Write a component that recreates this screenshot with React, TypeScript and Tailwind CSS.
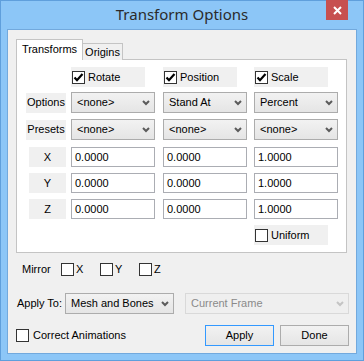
import type { ReactNode } from 'react'

const ui = { fontFamily: '"Liberation Sans", Arial, sans-serif' }

function Box({ checked }: { checked?: boolean }) {
  return (
    <span className="w-[13px] h-[13px] border border-[#333333] bg-white flex-shrink-0 flex items-center justify-center">
      {checked && (
        <svg width="11" height="11" viewBox="0 0 11 11">
          <path d="M1.5 5.5 L4 8.2 L9.5 2" fill="none" stroke="#000" strokeWidth="2.2" />
        </svg>
      )}
    </span>
  )
}

function Check({ label, checked }: { label: string; checked?: boolean }) {
  return (
    <div className="w-[74px] h-[20px] bg-[#f0f0f0] flex items-center pl-[1px] gap-[3px]">
      <Box checked={checked} />
      <span>{label}</span>
    </div>
  )
}

function Chevron({ color = '#5b5b5b' }: { color?: string }) {
  return (
    <svg width="8" height="6" viewBox="0 0 8 6" className="flex-shrink-0">
      <path d="M1 1 L4 4 L7 1" fill="none" stroke={color} strokeWidth="2" />
    </svg>
  )
}

function Select({ value, className = 'w-[84px]', disabled }: { value: string; className?: string; disabled?: boolean }) {
  return (
    <div
      className={`${className} h-[21px] flex items-center justify-between pl-[5px] pr-[4px] border ${
        disabled
          ? 'border-[#d9d9d9] bg-[#efefef] text-[#8a8a8a]'
          : 'border-[#acacac] bg-gradient-to-b from-[#f2f2f2] to-[#e5e5e5] text-black'
      }`}
    >
      <span>{value}</span>
      <Chevron color={disabled ? '#c4c4c4' : '#5b5b5b'} />
    </div>
  )
}

function Field({ value }: { value: string }) {
  return (
    <div className="w-[84px] h-[20px] border border-[#abadb3] bg-white flex items-center pl-[3px]">{value}</div>
  )
}

function Row({ top, cells }: { top: string; cells: ReactNode[] }) {
  return (
    <div className={`flex items-center ${top}`}>
      <div className="w-[40px] flex justify-center">{cells[0]}</div>
      <div className="ml-[5px] w-[84px]">{cells[1]}</div>
      <div className="ml-[8px] w-[84px]">{cells[2]}</div>
      <div className="ml-[7px] w-[84px]">{cells[3]}</div>
    </div>
  )
}

function Label({ text, narrow }: { text: string; narrow?: boolean }) {
  return (
    <div className={`${narrow ? 'w-[37px] ml-[3px]' : 'w-[40px]'} h-[20px] bg-[#f0f0f0] flex items-center justify-center`}>
      {text}
    </div>
  )
}

export default function App() {
  return (
    <div className="w-[364px] h-[361px] bg-[#8cc6f7] border border-[#5f9fdc] flex flex-col text-[11px] text-black" style={ui}>
      {/* Title bar */}
      <div className="h-[28px] relative flex items-center justify-center">
        <span className="text-[15px] text-[#2b2b2b] -mt-[1px]" style={{ fontFamily: '"Noto Sans", "Open Sans", sans-serif' }}>
          Transform Options
        </span>
        <div className="absolute top-[-1px] right-[15px] w-[22px] h-[20px] bg-[#c75050] flex items-center justify-center">
          <svg width="9" height="9" viewBox="0 0 9 9">
            <path d="M1 1 L8 8 M8 1 L1 8" stroke="#fff" strokeWidth="2" />
          </svg>
        </div>
      </div>

      {/* Client area */}
      <div className="mx-[6px] h-[325px] border border-[#72a9dd] bg-[#f0f0f0] flex flex-col">
        {/* Tabs */}
        <div className="flex items-end ml-[8px] mt-[9px] -mb-px relative z-10">
          <div className="w-[67px] h-[21px] bg-white border border-b-0 border-[#c4c4c4] flex items-center justify-center pb-[1px]">
            Transforms
          </div>
          <div className="w-[40px] h-[17px] bg-[#f0f0f0] border border-l-0 border-b-0 border-[#c4c4c4] flex items-center justify-center">
            Origins
          </div>
        </div>

        {/* Panel */}
        <div className="ml-[8px] w-[331px] h-[194px] border border-[#c4c4c4] bg-white pl-[9px] pt-[7px] flex flex-col">
          <Row
            top=""
            cells={[null, <Check label="Rotate" checked />, <Check label="Position" checked />, <Check label="Scale" checked />]}
          />
          <Row
            top="mt-[5px]"
            cells={[<Label text="Options" />, <Select value="<none>" />, <Select value="Stand At" />, <Select value="Percent" />]}
          />
          <Row
            top="mt-[6px]"
            cells={[<Label text="Presets" />, <Select value="<none>" />, <Select value="<none>" />, <Select value="<none>" />]}
          />
          <Row
            top="mt-[7px]"
            cells={[<Label text="X" narrow />, <Field value="0.0000" />, <Field value="0.0000" />, <Field value="1.0000" />]}
          />
          <Row
            top="mt-[6px]"
            cells={[<Label text="Y" narrow />, <Field value="0.0000" />, <Field value="0.0000" />, <Field value="1.0000" />]}
          />
          <Row
            top="mt-[6px]"
            cells={[<Label text="Z" narrow />, <Field value="0.0000" />, <Field value="0.0000" />, <Field value="1.0000" />]}
          />
          <Row top="mt-[6px]" cells={[null, null, null, <Check label="Uniform" />]} />
        </div>

        {/* Mirror */}
        <div className="flex items-center mt-[10px] h-[13px]">
          <span className="ml-[14px] w-[39px]">Mirror</span>
          <Box />
          <span className="ml-[2px] w-[24px]">X</span>
          <Box />
          <span className="ml-[2px] w-[24px]">Y</span>
          <Box />
          <span className="ml-[2px]">Z</span>
        </div>

        {/* Apply To */}
        <div className="flex items-center mt-[17px] ml-[9px]">
          <span className="w-[48px]">Apply To:</span>
          <Select value="Mesh and Bones" className="w-[109px]" />
          <Select value="Current Frame" className="w-[164px] ml-[11px]" disabled />
        </div>

        {/* Bottom row */}
        <div className="flex items-center mt-[11px]">
          <div className="ml-[8px] flex items-center gap-[4px]">
            <Box />
            <span>Correct Animations</span>
          </div>
          <div className="ml-auto mr-[7px] flex gap-[6px]">
            <div className="w-[69px] h-[21px] border border-[#3399ff] bg-gradient-to-b from-[#f2f2f2] to-[#e5e5e5] flex items-center justify-center">
              Apply
            </div>
            <div className="w-[69px] h-[21px] border border-[#acacac] bg-gradient-to-b from-[#f2f2f2] to-[#e5e5e5] flex items-center justify-center">
              Done
            </div>
          </div>
        </div>
      </div>
    </div>
  )
}
